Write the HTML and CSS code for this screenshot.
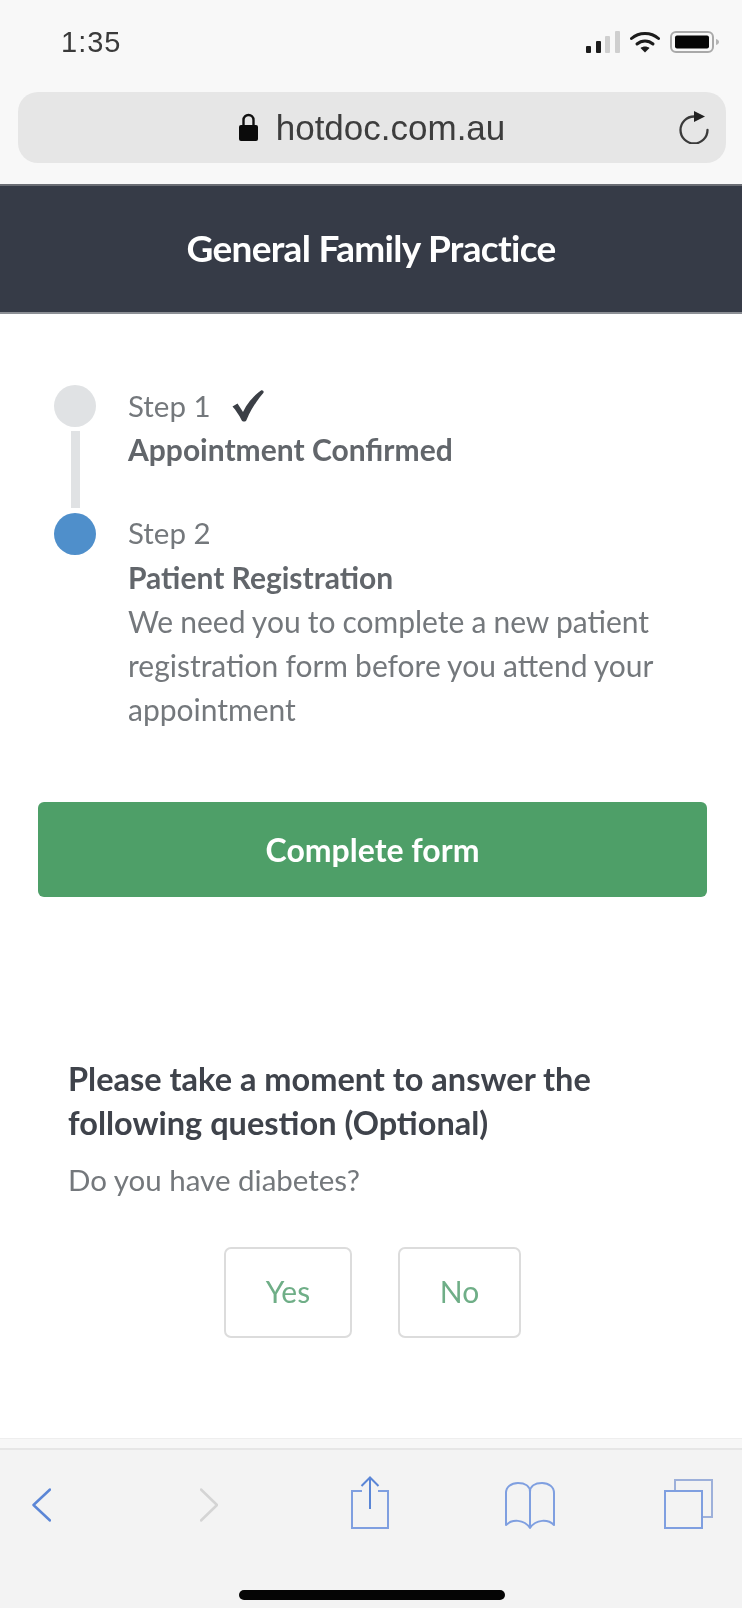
FILE: index.html
```html
<!DOCTYPE html>
<html lang="en">
<head>
<meta charset="utf-8">
<title>General Family Practice</title>
<link rel="stylesheet" href="styles.css">
</head>
<body>
<div class="phone">
  <div class="status">
    <span class="time">1:35</span>
    <div class="status-icons">
      <svg class="signal" viewBox="0 0 34 22" width="34" height="22"><rect x="0" y="15" width="5" height="7" rx="1" fill="#1c1c1c"/><rect x="10" y="10" width="5" height="12" rx="1" fill="#1c1c1c"/><rect x="19" y="5" width="5" height="17" rx="1" fill="#cfcfcf"/><rect x="29" y="0" width="5" height="22" rx="1" fill="#cfcfcf"/></svg>
      <svg class="wifi" viewBox="0 0 30 22" width="30" height="22"><path d="M1.5 7.5C9 .7 21 .7 28.5 7.5" fill="none" stroke="#1c1c1c" stroke-width="3" stroke-linecap="round"/><path d="M7 13c4.600-4 11.400-4 16 0" fill="none" stroke="#1c1c1c" stroke-width="3" stroke-linecap="round"/><path d="M10.500 17c2.600-2 6.400-2 9 0L15 21.500z" fill="#1c1c1c"/></svg>
      <svg class="battery" viewBox="0 0 50 22" width="50" height="22"><rect x="1" y="1" width="42" height="20" rx="5" fill="none" stroke="#a9a9a9" stroke-width="2"/><rect x="5" y="4.500" width="34" height="13" rx="2" fill="#050505"/><path d="M46 8c2 .6 3 1.600 3 3s-1 2.400-3 3z" fill="#b5b5b5"/></svg>
    </div>
  </div>
  <div class="urlbar">
    <span></span>
    <div class="url">
      <svg class="lock" viewBox="0 0 19 28" width="19" height="28"><path d="M4.500 13V7a5 5 0 0 1 10 0v6" fill="none" stroke="#111" stroke-width="2.400"/><rect x="0" y="12" width="19" height="16" rx="2" fill="#0b0b0b"/></svg>
      <span class="url-text">hotdoc.com.au</span>
    </div>
    <svg class="reload" viewBox="0 0 30 33" width="30" height="33"><path d="M15 5.500A13.500 13.500 0 1 0 28.500 19" fill="none" stroke="#3a3a3a" stroke-width="2.300" stroke-linecap="round"/><path d="M15 0l11 5.500-11 5.500z" fill="#222"/></svg>
  </div>
  <header class="practice">General Family Practice</header>
  <main class="content">
    <div class="steps">
      <div class="step step-done">
        <div class="rail"><span class="dot dot-grey"></span><span class="connector"></span></div>
        <div class="step-text">
          <div class="step-label">Step 1
            <svg class="tick" viewBox="0 0 34 34" width="34" height="34"><path d="M1.500 17.500l5-3 5.500 8.500C16 14 22.500 7 30 1.500c1.500-1 3.500 1 2.300 2.500C25 12.500 19.500 21.500 15.500 31c-.8 2-4 2-5 0C8 26 5 21.500 1.500 17.500z" fill="#3b3f46"/></svg>
          </div>
          <div class="step-title">Appointment Confirmed</div>
        </div>
      </div>
      <div class="step">
        <div class="rail"><span class="dot dot-blue"></span></div>
        <div class="step-text">
          <div class="step-label">Step 2</div>
          <div class="step-title">Patient Registration</div>
          <p class="step-desc">We need you to complete a new patient registration form before you attend your appointment</p>
        </div>
      </div>
    </div>
    <a class="cta">Complete form</a>
    <section class="question">
      <h2 class="q-title">Please take a moment to answer the following question (Optional)</h2>
      <p class="q-text">Do you have diabetes?</p>
      <div class="answers">
        <button class="answer answer-yes">Yes</button>
        <button class="answer answer-no">No</button>
      </div>
    </section>
  </main>
  <div class="strip"></div>
  <footer class="toolbar">
    <div class="tools">
      <svg class="t-back" viewBox="0 0 19 34" width="19" height="34"><path d="M18 1.500L1.500 17 18 32.500" fill="none" stroke="#5b86d6" stroke-width="2.500" stroke-linecap="round" stroke-linejoin="round"/></svg>
      <svg class="t-fwd" viewBox="0 0 18 34" width="18" height="34"><path d="M1 1.500L17 17 1 32.500" fill="none" stroke="#d4d4d4" stroke-width="2.500" stroke-linecap="round" stroke-linejoin="round"/></svg>
      <svg class="t-share" viewBox="0 0 38 53" width="38" height="53"><path d="M11 15H1v37h36V15H27" fill="none" stroke="#7f9fe0" stroke-width="2"/><path d="M19 2v31M10.500 10L19 1.500 27.500 10" fill="none" stroke="#5b86d6" stroke-width="2"/></svg>
      <svg class="t-book" viewBox="0 0 50 48" width="50" height="48"><path d="M25 10C25 4 20 1 13 1 6 1 1 5 1 11v32c6-6 18-6 24 3 6-9 18-9 24-3V11C49 5 44 1 37 1 30 1 25 4 25 10v36" fill="none" stroke="#7f9fe0" stroke-width="2" stroke-linejoin="round"/></svg>
      <svg class="t-tabs" viewBox="0 0 49 50" width="49" height="50"><path d="M11 12V1h37v37H38" fill="none" stroke="#9db0da" stroke-width="2"/><rect x="1" y="12" width="37" height="37" fill="none" stroke="#7f9fe0" stroke-width="2"/></svg>
    </div>
    <div class="home-bar"></div>
  </footer>
</div>
</body>
</html>
```
FILE: styles.css
```css
* { box-sizing: border-box; }
html, body { margin: 0; padding: 0; }
body { background: #f8f8f8; }
.phone {
  width: 742px;
  height: 1608px;
  display: flex;
  flex-direction: column;
  background: #f8f8f8;
  overflow: hidden;
  font-family: Lato, "Liberation Sans", sans-serif;
  filter: blur(0.7px);
}
.status {
  height: 92px;
  flex: none;
  display: flex;
  justify-content: space-between;
  padding: 21px 22px 0 61px;
}
.time {
  font-family: "Liberation Sans", sans-serif;
  font-size: 29px;
  line-height: 42px;
  letter-spacing: 1px;
  color: #3a3a3a;
}
.status-icons { display: flex; gap: 10px; height: 22px; margin-top: 10px; align-items: flex-start; }
.urlbar {
  flex: none;
  height: 71px;
  margin: 0 16px 21px 18px;
  border-radius: 20px;
  background: #e6e6e6;
  display: grid;
  grid-template-columns: 1fr auto 1fr;
  align-items: center;
}
.url { display: flex; align-items: center; gap: 18px; }
.url-text {
  font-family: "Liberation Sans", sans-serif;
  font-size: 35px;
  color: #3d3d3d;
  line-height: 71px;
}
.lock { margin-top: -2px; }
.reload { justify-self: end; margin-right: 17px; }
.practice {
  flex: none;
  height: 130px;
  background: #363b47;
  border-top: 2px solid #6a6d74;
  border-bottom: 2px solid #8c8f95;
  color: #fff;
  font-weight: 700;
  font-size: 37px;
  letter-spacing: -0.7px;
  line-height: 124px;
  text-align: center;
}
.content {
  flex: 1;
  background: #fff;
  padding: 71px 35px 0 38px;
  font-size: 30px;
  line-height: 44px;
  color: #74787c;
}
.steps { padding-left: 16px; }
.step { display: flex; gap: 32px; }
.step-done { height: 127px; }
.rail { width: 42px; flex: none; display: flex; flex-direction: column; align-items: center; }
.dot { width: 42px; height: 42px; border-radius: 50%; flex: none; }
.dot-grey { background: #e0e2e4; }
.dot-blue { background: #4f8fcb; margin-top: 1px; }
.connector { width: 9px; height: 77px; margin-top: 4px; background: #e0e2e4; }
.step-text { margin-top: -1px; }
.step-label { display: flex; align-items: center; gap: 20px; height: 44px; font-size: 29.500px; }
.step-done .step-title { margin-top: -1px; }
.step-title { font-weight: 700; color: #62666b; }
.step-desc { margin: 0; word-spacing: -0.600px; }
.cta {
  display: block;
  height: 95px;
  margin-top: 71px;
  border-radius: 6px;
  background: #4e9f68;
  color: #fff;
  font-weight: 700;
  font-size: 32px;
  line-height: 95px;
  text-align: center;
}
.question { margin-top: 160px; padding: 0 50px 0 30px; }
.q-title { margin: 0; font-size: 32.500px; line-height: 44px; font-weight: 700; color: #3f434b; }
.q-text { margin: 13px 0 0; font-size: 29.500px; color: #74787c; }
.answers { display: flex; justify-content: center; gap: 46px; margin-top: 45px; margin-right: -20px; }
.answer {
  height: 91px;
  background: #fff;
  border: 2px solid #dcdcdc;
  border-radius: 7px;
  color: #6fae87;
  font-family: inherit;
  font-size: 30px;
  padding: 0 0 4px;
}
.answer-yes { width: 128px; }
.answer-no { width: 123px; }
.strip { flex: none; height: 12px; background: #f7f7f7; border-bottom: 2px solid #e6e6e6; border-top: 1px solid #eeeeee; }
.toolbar { flex: none; height: 158px; background: #f3f3f3; }
.tools {
  height: 100px;
  padding-left: 32px;
  display: flex;
  align-items: flex-start;
}
.t-back { margin-top: 38px; }
.t-fwd { margin-top: 38px; margin-left: 149px; }
.t-share { margin-top: 26px; margin-left: 133px; }
.t-book { margin-top: 32px; margin-left: 116px; }
.t-tabs { margin-top: 29px; margin-left: 109px; }
.home-bar {
  width: 266px;
  height: 10px;
  border-radius: 5px;
  background: #050505;
  margin: 40px 0 0 239px;
}
```
